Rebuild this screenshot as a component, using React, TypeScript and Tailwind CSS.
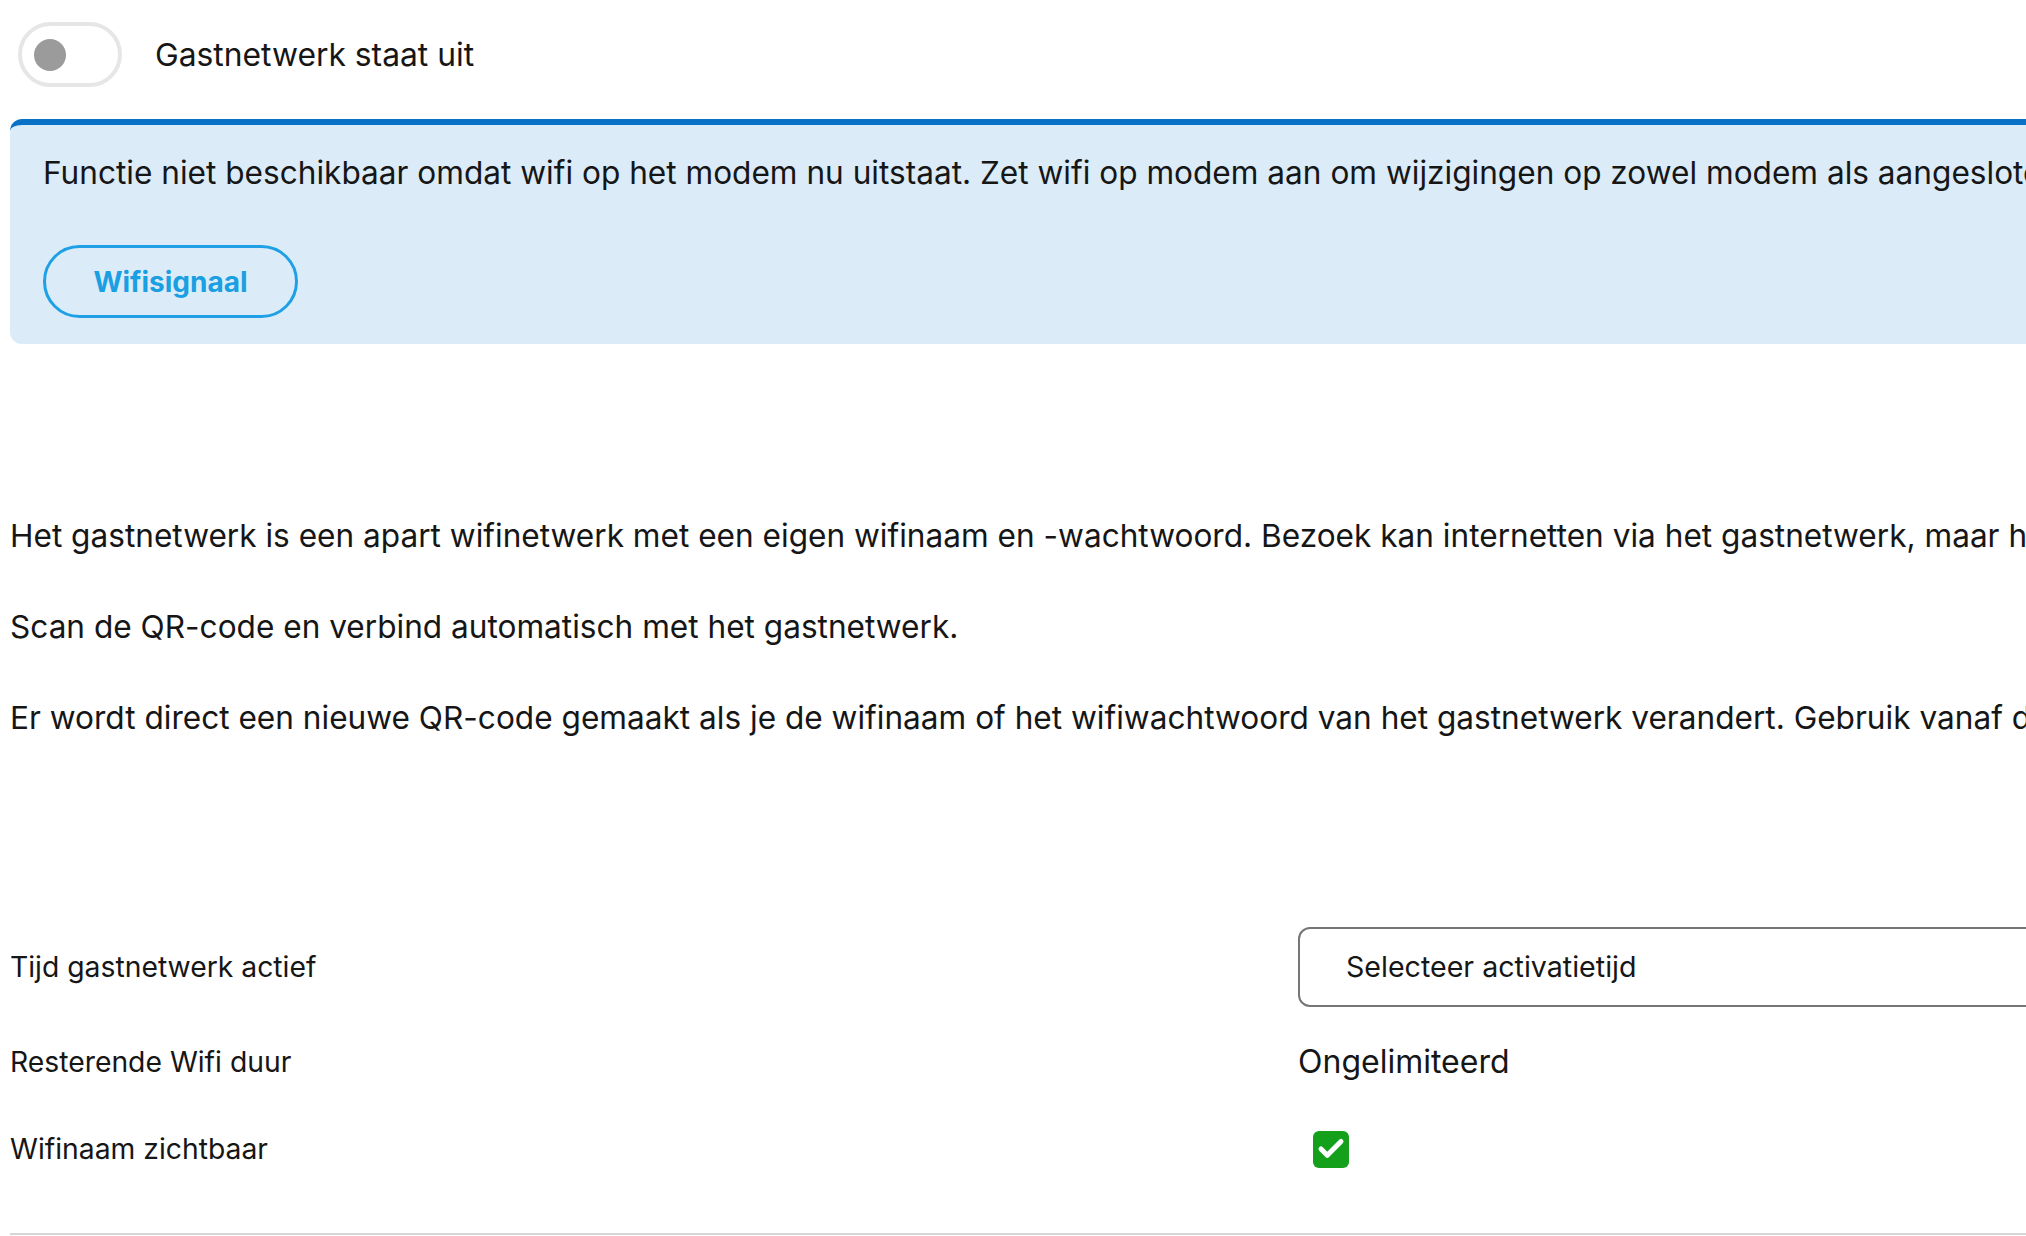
import { Check } from "lucide-react";

const FONT = "font-['Inter','Noto_Sans',sans-serif]";

function Toggle() {
  return (
    <div className="w-[104px] h-[65px] rounded-full border-4 border-[#e6e6e6] bg-white flex items-center pl-[12px] shrink-0">
      <span className="w-[32px] h-[32px] rounded-full bg-[#9b9b9b]" />
    </div>
  );
}

function Row({ label, children, className = "" }: { label: string; children: React.ReactNode; className?: string }) {
  return (
    <div className={`grid grid-cols-[1288px_1fr] items-center ${className}`}>
      <div className="text-[28.3px] leading-[40px]">{label}</div>
      <div>{children}</div>
    </div>
  );
}

export default function App() {
  return (
    <div className={`w-[2026px] h-[1236px] overflow-hidden bg-white text-[#161616] ${FONT}`}>
      <div className="w-[2400px] pl-[10px]">
        {/* Toggle header */}
        <div className="flex items-center gap-[33px] pl-[8px] pt-[22px]">
          <Toggle />
          <span className="text-[31.8px] leading-[40px]">Gastnetwerk staat uit</span>
        </div>

        {/* Info alert */}
        <div className="mt-[32px] rounded-[12px] border-t-[6px] border-[#0a72c6] bg-[#dbecf8] pl-[33px] pt-[28px] pb-[26px]">
          <p className="text-[31.6px] leading-[40px] whitespace-nowrap">
            Functie niet beschikbaar omdat wifi op het modem nu uitstaat. Zet wifi op modem aan om wijzigingen op zowel modem als aangesloten apparaten door te voeren.
          </p>
          <button className="mt-[52px] w-[255px] h-[73px] rounded-full border-[3px] border-[#1fa0e6] text-[28px] font-bold text-[#1a9fe3]">
            Wifisignaal
          </button>
        </div>

        {/* Description */}
        <div className="mt-[172px] flex flex-col gap-[51px] text-[31.6px] leading-[40px] whitespace-nowrap">
          <p>
            Het gastnetwerk is een apart wifinetwerk met een eigen wifinaam en -wachtwoord. Bezoek kan internetten via het gastnetwerk, maar heeft geen toegang tot je thuisnetwerk.
          </p>
          <p>Scan de QR-code en verbind automatisch met het gastnetwerk.</p>
          <p>
            Er wordt direct een nieuwe QR-code gemaakt als je de wifinaam of het wifiwachtwoord van het gastnetwerk verandert. Gebruik vanaf dan de nieuwe QR-code.
          </p>
        </div>

        {/* Settings */}
        <div className="mt-[189px] w-[2016px]">
          <Row label="Tijd gastnetwerk actief">
            <div className="h-[80px] w-[900px] rounded-[12px] border-2 border-[#767676] flex items-center pl-[46px] text-[28.6px]">
              Selecteer activatietijd
            </div>
          </Row>
          <Row label="Resterende Wifi duur" className="mt-[35px]">
            <span className="text-[32px] leading-[40px]">Ongelimiteerd</span>
          </Row>
          <Row label="Wifinaam zichtbaar" className="mt-[47px]">
            <div className="ml-[15px] w-[36px] h-[37px] rounded-[6px] bg-[#14a01a] flex items-center justify-center">
              <Check size={30} strokeWidth={4} className="text-white" />
            </div>
          </Row>
          <div className="mt-[64px] h-[2px] bg-[#d6d6d6]" />
        </div>
      </div>
    </div>
  );
}
